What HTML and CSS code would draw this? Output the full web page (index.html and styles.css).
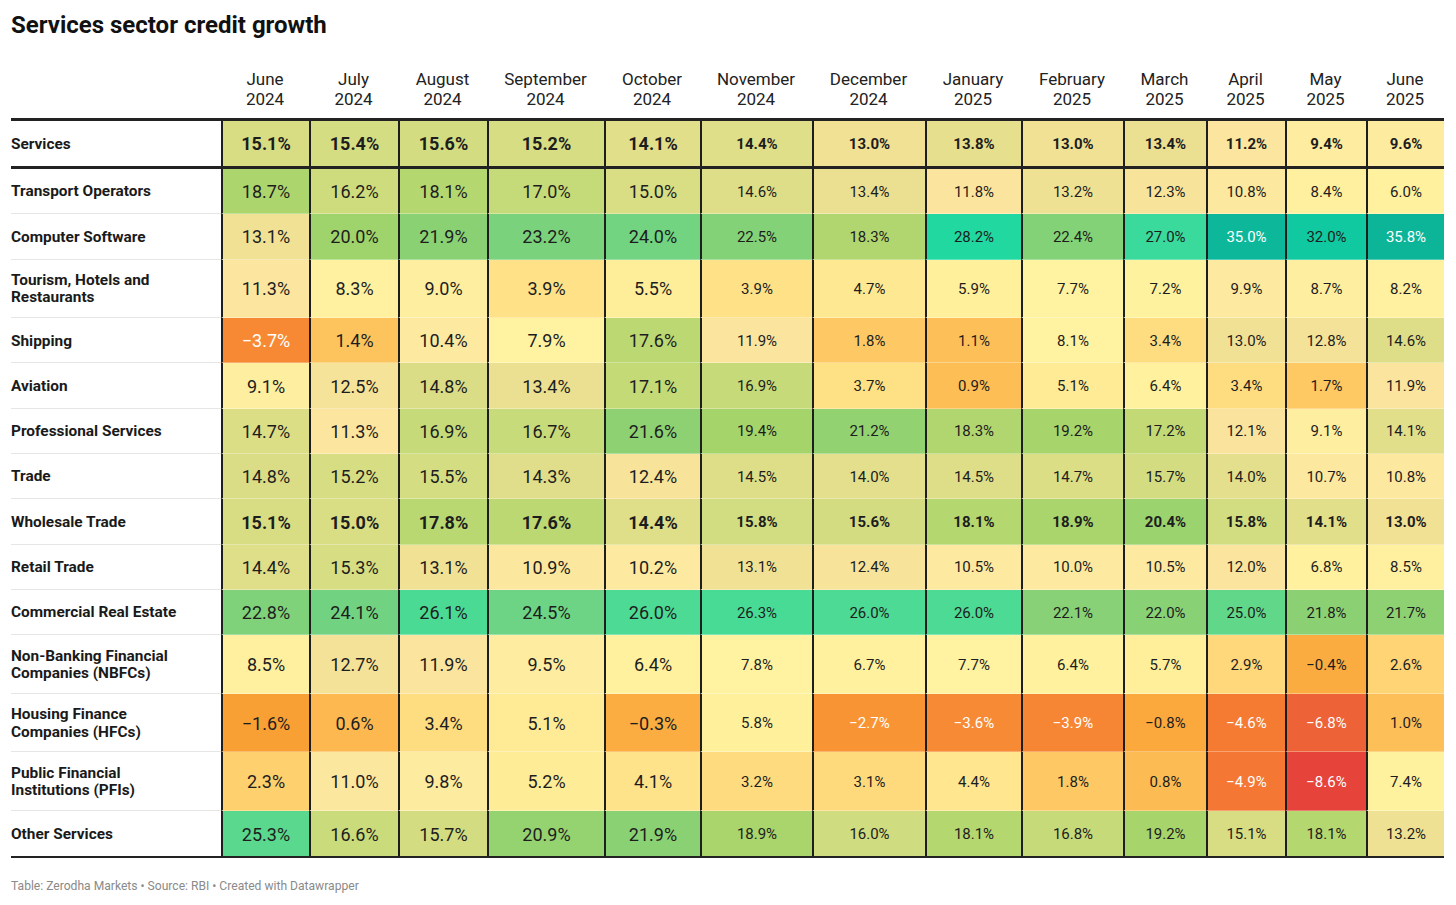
FILE: index.html
```html
<!DOCTYPE html>
<html lang="en">
<head>
<meta charset="utf-8">
<title>Services sector credit growth</title>
<link rel="stylesheet" href="styles.css">
</head>
<body>
<div class="chart">
  <h1 class="title">Services sector credit growth</h1>
  <div class="table">
    <div class="row head">
      <div class="h label"></div>
      <div class="h">June<br>2024</div>
      <div class="h">July<br>2024</div>
      <div class="h">August<br>2024</div>
      <div class="h">September<br>2024</div>
      <div class="h">October<br>2024</div>
      <div class="h">November<br>2024</div>
      <div class="h">December<br>2024</div>
      <div class="h">January<br>2025</div>
      <div class="h">February<br>2025</div>
      <div class="h">March<br>2025</div>
      <div class="h">April<br>2025</div>
      <div class="h">May<br>2025</div>
      <div class="h">June<br>2025</div>
    </div>
    <div class="row total bold">
      <div class="label">Services</div>
      <div class="c">15.1%</div><div class="c">15.4%</div><div class="c">15.6%</div><div class="c">15.2%</div><div class="c">14.1%</div><div class="c">14.4%</div><div class="c">13.0%</div><div class="c">13.8%</div><div class="c">13.0%</div><div class="c">13.4%</div><div class="c">11.2%</div><div class="c">9.4%</div><div class="c">9.6%</div>
    </div>
    <div class="row">
      <div class="label">Transport Operators</div>
      <div class="c">18.7%</div><div class="c">16.2%</div><div class="c">18.1%</div><div class="c">17.0%</div><div class="c">15.0%</div><div class="c">14.6%</div><div class="c">13.4%</div><div class="c">11.8%</div><div class="c">13.2%</div><div class="c">12.3%</div><div class="c">10.8%</div><div class="c">8.4%</div><div class="c">6.0%</div>
    </div>
    <div class="row">
      <div class="label">Computer Software</div>
      <div class="c">13.1%</div><div class="c">20.0%</div><div class="c">21.9%</div><div class="c">23.2%</div><div class="c">24.0%</div><div class="c">22.5%</div><div class="c">18.3%</div><div class="c">28.2%</div><div class="c">22.4%</div><div class="c">27.0%</div><div class="c">35.0%</div><div class="c">32.0%</div><div class="c">35.8%</div>
    </div>
    <div class="row tall">
      <div class="label">Tourism, Hotels and<br>Restaurants</div>
      <div class="c">11.3%</div><div class="c">8.3%</div><div class="c">9.0%</div><div class="c">3.9%</div><div class="c">5.5%</div><div class="c">3.9%</div><div class="c">4.7%</div><div class="c">5.9%</div><div class="c">7.7%</div><div class="c">7.2%</div><div class="c">9.9%</div><div class="c">8.7%</div><div class="c">8.2%</div>
    </div>
    <div class="row">
      <div class="label">Shipping</div>
      <div class="c">−3.7%</div><div class="c">1.4%</div><div class="c">10.4%</div><div class="c">7.9%</div><div class="c">17.6%</div><div class="c">11.9%</div><div class="c">1.8%</div><div class="c">1.1%</div><div class="c">8.1%</div><div class="c">3.4%</div><div class="c">13.0%</div><div class="c">12.8%</div><div class="c">14.6%</div>
    </div>
    <div class="row">
      <div class="label">Aviation</div>
      <div class="c">9.1%</div><div class="c">12.5%</div><div class="c">14.8%</div><div class="c">13.4%</div><div class="c">17.1%</div><div class="c">16.9%</div><div class="c">3.7%</div><div class="c">0.9%</div><div class="c">5.1%</div><div class="c">6.4%</div><div class="c">3.4%</div><div class="c">1.7%</div><div class="c">11.9%</div>
    </div>
    <div class="row">
      <div class="label">Professional Services</div>
      <div class="c">14.7%</div><div class="c">11.3%</div><div class="c">16.9%</div><div class="c">16.7%</div><div class="c">21.6%</div><div class="c">19.4%</div><div class="c">21.2%</div><div class="c">18.3%</div><div class="c">19.2%</div><div class="c">17.2%</div><div class="c">12.1%</div><div class="c">9.1%</div><div class="c">14.1%</div>
    </div>
    <div class="row">
      <div class="label">Trade</div>
      <div class="c">14.8%</div><div class="c">15.2%</div><div class="c">15.5%</div><div class="c">14.3%</div><div class="c">12.4%</div><div class="c">14.5%</div><div class="c">14.0%</div><div class="c">14.5%</div><div class="c">14.7%</div><div class="c">15.7%</div><div class="c">14.0%</div><div class="c">10.7%</div><div class="c">10.8%</div>
    </div>
    <div class="row bold">
      <div class="label">Wholesale Trade</div>
      <div class="c">15.1%</div><div class="c">15.0%</div><div class="c">17.8%</div><div class="c">17.6%</div><div class="c">14.4%</div><div class="c">15.8%</div><div class="c">15.6%</div><div class="c">18.1%</div><div class="c">18.9%</div><div class="c">20.4%</div><div class="c">15.8%</div><div class="c">14.1%</div><div class="c">13.0%</div>
    </div>
    <div class="row">
      <div class="label">Retail Trade</div>
      <div class="c">14.4%</div><div class="c">15.3%</div><div class="c">13.1%</div><div class="c">10.9%</div><div class="c">10.2%</div><div class="c">13.1%</div><div class="c">12.4%</div><div class="c">10.5%</div><div class="c">10.0%</div><div class="c">10.5%</div><div class="c">12.0%</div><div class="c">6.8%</div><div class="c">8.5%</div>
    </div>
    <div class="row">
      <div class="label">Commercial Real Estate</div>
      <div class="c">22.8%</div><div class="c">24.1%</div><div class="c">26.1%</div><div class="c">24.5%</div><div class="c">26.0%</div><div class="c">26.3%</div><div class="c">26.0%</div><div class="c">26.0%</div><div class="c">22.1%</div><div class="c">22.0%</div><div class="c">25.0%</div><div class="c">21.8%</div><div class="c">21.7%</div>
    </div>
    <div class="row tall">
      <div class="label">Non-Banking Financial<br>Companies (NBFCs)</div>
      <div class="c">8.5%</div><div class="c">12.7%</div><div class="c">11.9%</div><div class="c">9.5%</div><div class="c">6.4%</div><div class="c">7.8%</div><div class="c">6.7%</div><div class="c">7.7%</div><div class="c">6.4%</div><div class="c">5.7%</div><div class="c">2.9%</div><div class="c">−0.4%</div><div class="c">2.6%</div>
    </div>
    <div class="row tall">
      <div class="label">Housing Finance<br>Companies (HFCs)</div>
      <div class="c">−1.6%</div><div class="c">0.6%</div><div class="c">3.4%</div><div class="c">5.1%</div><div class="c">−0.3%</div><div class="c">5.8%</div><div class="c">−2.7%</div><div class="c">−3.6%</div><div class="c">−3.9%</div><div class="c">−0.8%</div><div class="c">−4.6%</div><div class="c">−6.8%</div><div class="c">1.0%</div>
    </div>
    <div class="row tall">
      <div class="label">Public Financial<br>Institutions (PFIs)</div>
      <div class="c">2.3%</div><div class="c">11.0%</div><div class="c">9.8%</div><div class="c">5.2%</div><div class="c">4.1%</div><div class="c">3.2%</div><div class="c">3.1%</div><div class="c">4.4%</div><div class="c">1.8%</div><div class="c">0.8%</div><div class="c">−4.9%</div><div class="c">−8.6%</div><div class="c">7.4%</div>
    </div>
    <div class="row last">
      <div class="label">Other Services</div>
      <div class="c">25.3%</div><div class="c">16.6%</div><div class="c">15.7%</div><div class="c">20.9%</div><div class="c">21.9%</div><div class="c">18.9%</div><div class="c">16.0%</div><div class="c">18.1%</div><div class="c">16.8%</div><div class="c">19.2%</div><div class="c">15.1%</div><div class="c">18.1%</div><div class="c">13.2%</div>
    </div>
  </div>
  <p class="footer">Table: Zerodha Markets • Source: RBI • Created with Datawrapper</p>
</div>
<script src="script.js"></script>
</body>
</html>
```

FILE: styles.css
```css
* {
  box-sizing: border-box;
  margin: 0;
  padding: 0;
}

body {
  background: #ffffff;
  font-family: Roboto, "Liberation Sans", sans-serif;
  color: #1d1d1d;
}

.chart {
  padding: 10px 12px 0 11px;
}

.title {
  font-size: 24px;
  line-height: 30px;
  font-weight: 700;
  color: #111111;
}

.table {
  margin-top: 29px;
  width: 1433px;
  border-bottom: 2px solid #222222;
}

.row {
  display: grid;
  grid-template-columns: 210px 88px 89px 89px 117px 96px 112px 113px 96px 102px 83px 79px 81px 78px;
  height: 45.3px;
}

.row.tall {
  height: 58.6px;
}

.row.head {
  height: 52px;
  border-bottom: 3px solid #222222;
}

.row.total {
  height: 48px;
  border-bottom: 3px solid #222222;
}

.h {
  font-size: 17px;
  line-height: 20px;
  text-align: center;
  color: #222222;
}

.label {
  display: flex;
  align-items: center;
  padding-top: 2px;
  font-size: 15.4px;
  line-height: 17.5px;
  font-weight: 700;
  color: #1a1a1a;
  border-bottom: 1px solid #e6e6e6;
}

.h.label {
  border-bottom: none;
}

.c {
  display: flex;
  align-items: center;
  justify-content: center;
  font-size: 15px;
  color: #1d1d1d;
  border-left: 2px solid #1e1e1e;
  border-bottom: 1px solid rgba(255, 255, 255, 0.3);
  padding-top: 1px;
}

.row .c:nth-child(-n+6) {
  font-size: 18px;
}

.row.bold .c {
  font-weight: 700;
}

.row.total .label,
.row.total .c,
.row.last .label,
.row.last .c {
  border-bottom: none;
}

.row.total .c {
  padding-top: 0;
}

.c.light {
  color: #ffffff;
}

.footer {
  margin-top: 20px;
  font-size: 12.1px;
  line-height: 16px;
  color: #8a8a8a;
}
```

FILE: script.js
```js
(function () {
  var stops = [
    [-8.6, '#e6443a'], [-6.8, '#ee6237'], [-4.6, '#f57b33'], [-3.7, '#f78934'],
    [-1.6, '#f9a035'], [0, '#fcb045'], [1, '#fdbf57'], [2, '#fecc68'],
    [3, '#fed97c'], [4.5, '#ffe790'], [6, '#fff19d'], [8, '#fff2a0'],
    [10, '#fdeaa0'], [12, '#fbe49e'], [13, '#f1e195'], [14, '#e3df8c'],
    [15, '#d9dd84'], [16, '#d0dc80'], [17, '#c5da78'], [18, '#b6d770'],
    [19, '#a9d46b'], [20, '#9fd46c'], [21.5, '#8fd172'], [23, '#7dd27b'],
    [24.5, '#6cd484'], [25.5, '#55d98f'], [26.5, '#45db98'], [28, '#21d9a0'],
    [32, '#11c9a0'], [35, '#0db89a'], [36, '#0cb497']
  ];
  function hex(h) {
    return [parseInt(h.substr(1, 2), 16), parseInt(h.substr(3, 2), 16), parseInt(h.substr(5, 2), 16)];
  }
  function color(v) {
    if (v <= stops[0][0]) return stops[0][1];
    for (var i = 1; i < stops.length; i++) {
      if (v <= stops[i][0]) {
        var a = stops[i - 1], b = stops[i];
        var t = (v - a[0]) / (b[0] - a[0]);
        var ca = hex(a[1]), cb = hex(b[1]);
        var r = [0, 1, 2].map(function (k) { return Math.round(ca[k] + (cb[k] - ca[k]) * t); });
        return 'rgb(' + r.join(',') + ')';
      }
    }
    return stops[stops.length - 1][1];
  }
  var cells = document.querySelectorAll('.c');
  cells.forEach(function (el) {
    var v = parseFloat(el.textContent.replace('\u2212', '-'));
    el.style.background = color(v);
    if (v <= -2.7 || v >= 34) el.classList.add('light');
  });
})();
```
